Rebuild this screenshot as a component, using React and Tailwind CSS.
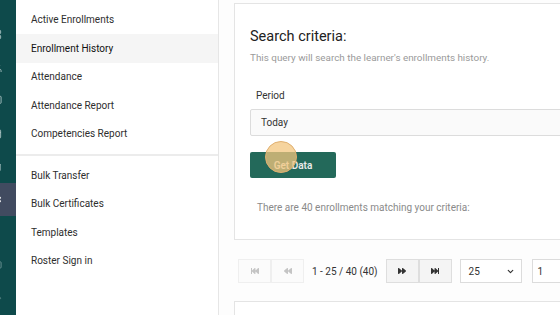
import React from 'react';
import { FaFastBackward, FaBackward, FaForward, FaFastForward } from 'react-icons/fa';
import { ChevronDown, LayoutGrid, Users, BookOpen, Calendar, FileText, Settings, Award, Folder, Bell } from 'lucide-react';

const groupOne = ['Active Enrollments', 'Enrollment History', 'Attendance', 'Attendance Report', 'Competencies Report'];
const groupTwo = ['Bulk Transfer', 'Bulk Certificates', 'Templates', 'Roster Sign in'];

const PageBtn = ({ icon: Icon, disabled }) => (
  <button
    className={`flex h-[24px] w-[33px] items-center justify-center border ${
      disabled ? 'border-[#efefef] bg-[#fbfbfb] text-[#c4c4c4]' : 'border-[#dedede] bg-[#f4f4f4] text-[#333]'
    }`}
  >
    <Icon className="h-[8px] w-[8px]" />
  </button>
);

export default function App() {
  return (
    <div className="flex h-[315px] w-[560px] overflow-hidden bg-white font-['Roboto',sans-serif]">
      {/* icon rail */}
      <div className="flex w-[16px] shrink-0 flex-col overflow-hidden bg-[#0e4a4b]">
        <div className="h-[18px]" />
        {[LayoutGrid, Users, BookOpen, Calendar, FileText].map((Icon, i) => (
          <div key={i} className="flex h-[33px] items-center">
            <Icon className="-ml-[9px] h-[11px] w-[11px] text-[#a9c2c2]" />
          </div>
        ))}
        <div className="flex h-[33px] items-center bg-[#414b60]">
          <Settings className="-ml-[9px] h-[11px] w-[11px] text-white" />
        </div>
        {[Award, Folder, Bell].map((Icon, i) => (
          <div key={i} className="flex h-[32px] items-center">
            <Icon className="-ml-[9px] h-[11px] w-[11px] text-[#6f9696]" />
          </div>
        ))}
      </div>

      {/* sub menu */}
      <div className="w-[203px] shrink-0 border-r border-[#e6e6e6] bg-white pt-[5.5px] text-[10px] text-[#2e2e2e]">
        {groupOne.map((label) => (
          <div
            key={label}
            className={`flex h-[28.5px] items-center pl-[15px] ${label === 'Enrollment History' ? 'bg-[#f5f5f5] text-[#111]' : ''}`}
          >
            {label}
          </div>
        ))}
        <div className="mt-[6px] mb-[5px] h-[2px] bg-[#ececec]" />
        {groupTwo.map((label) => (
          <div key={label} className="flex h-[28.5px] items-center pl-[15px]">
            {label}
          </div>
        ))}
      </div>

      {/* main */}
      <div className="flex-1 bg-[#fdfdfd] pl-[15px] pt-[3px]">
        <div className="h-[237px] w-[400px] border border-[#e4e4e4] bg-white pl-[15px]">
          <h2 className="pt-[23px] text-[14.5px] leading-5 text-[#222]">Search criteria:</h2>
          <p className="mt-[3px] text-[9.9px] leading-4 text-[#9a9a9a]">This query will search the learner's enrollments history.</p>
          <p className="mt-[22px] ml-[6px] text-[10px] leading-4 text-[#333]">Period</p>
          <div className="mt-[5px] flex h-[27px] items-center rounded-[2px] border border-[#dcdcdc] bg-[#fafafa] pl-[10px] text-[10px] text-[#333]">
            Today
          </div>
          <div className="relative mt-[16px] h-[26px] w-[86px]">
            <button className="flex h-full w-full items-center justify-center rounded-[2px] bg-[#23695a] text-[10px] font-semibold text-[#e9e9e9]">
              Get Data
            </button>
            <div className="absolute -top-[11px] left-[15px] h-[32px] w-[32px] rounded-full border border-[#e0b070] bg-[#f3c67e]/75" />
          </div>
          <p className="mt-[22px] ml-[7px] text-[10px] leading-4 text-[#8a8a8a]">There are 40 enrollments matching your criteria:</p>
        </div>

        {/* pagination */}
        <div className="mt-[19px] ml-[4px] flex h-[24px] items-center">
          <PageBtn icon={FaFastBackward} disabled />
          <PageBtn icon={FaBackward} disabled />
          <span className="mx-[8px] text-[10px] text-[#333]">1 - 25 / 40 (40)</span>
          <PageBtn icon={FaForward} />
          <PageBtn icon={FaFastForward} />
          <div className="ml-[8px] flex h-[24px] w-[62px] items-center justify-between border border-[#dcdcdc] bg-white pl-[8px] pr-[6px] text-[10px] text-[#333]">
            25
            <ChevronDown className="h-[9px] w-[9px] text-[#333]" strokeWidth={3} />
          </div>
          <div className="ml-[10px] flex h-[24px] w-[60px] shrink-0 items-center border border-[#dcdcdc] bg-white pl-[5px] text-[10px] text-[#333]">
            1
          </div>
        </div>

        <div className="mt-[18px] h-[40px] w-[400px] border border-[#e4e4e4] bg-white" />
      </div>
    </div>
  );
}
